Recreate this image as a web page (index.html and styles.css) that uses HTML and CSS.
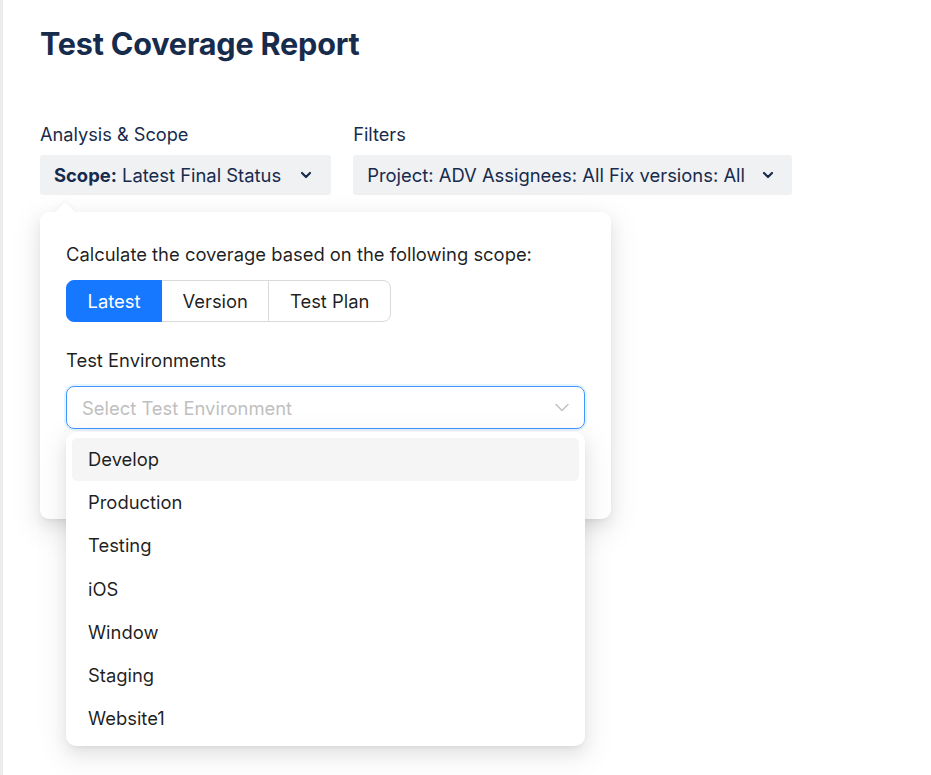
FILE: index.html
```html
<!DOCTYPE html>
<html lang="en">
<head>
<meta charset="utf-8">
<title>Test Coverage Report</title>
<link rel="stylesheet" href="styles.css">
</head>
<body>
<div class="page">
  <h1 class="title">Test Coverage Report</h1>
  <div class="toolbar">
    <div class="group">
      <div class="group-label">Analysis &amp; Scope</div>
      <div class="anchor">
        <button class="pill pill-scope"><b>Scope:</b>&nbsp;Latest Final Status
          <svg class="chev" width="12" height="8" viewBox="0 0 12 8"><path d="M2 2l4 4 4-4" fill="none" stroke="#172B4D" stroke-width="2.2" stroke-linecap="round" stroke-linejoin="round"/></svg>
        </button>
        <div class="popover">
          <div class="arrow"></div>
          <div class="pop-text">Calculate the coverage based on the following scope:</div>
          <div class="segmented">
            <span class="seg active">Latest</span>
            <span class="seg">Version</span>
            <span class="seg">Test Plan</span>
          </div>
          <div class="field-label">Test Environments</div>
          <div class="select">
            <span class="placeholder">Select Test Environment</span>
            <svg class="sel-chev" width="14" height="9" viewBox="0 0 14 9"><path d="M1 1.5l6 6 6-6" fill="none" stroke="#bfbfbf" stroke-width="1.4" stroke-linecap="round" stroke-linejoin="round"/></svg>
          </div>
          <div class="dropdown">
            <div class="option hover">Develop</div>
            <div class="option">Production</div>
            <div class="option">Testing</div>
            <div class="option">iOS</div>
            <div class="option">Window</div>
            <div class="option">Staging</div>
            <div class="option">Website1</div>
          </div>
        </div>
      </div>
    </div>
    <div class="group">
      <div class="group-label">Filters</div>
      <button class="pill">Project: ADV Assignees: All Fix versions: All
        <svg class="chev" width="12" height="8" viewBox="0 0 12 8"><path d="M2 2l4 4 4-4" fill="none" stroke="#172B4D" stroke-width="2.2" stroke-linecap="round" stroke-linejoin="round"/></svg>
      </button>
    </div>
  </div>
</div>
</body>
</html>
```

FILE: styles.css
```css
* { box-sizing: border-box; }
html, body { margin: 0; padding: 0; background: #fff; }
body {
  font-family: Inter, "Liberation Sans", sans-serif;
  color: #172B4D;
}
.page {
  min-height: 775px;
  border-left: 3px solid #ececec;
  padding: 26px 0 0 37px;
}
.title {
  margin: 0;
  font-size: 30.6px;
  font-weight: 700;
  line-height: 36px;
  color: #172B4D;
  letter-spacing: -0.2px;
}
.toolbar {
  display: flex;
  gap: 22px;
  margin-top: 60px;
}
.group-label {
  font-size: 18.2px;
  line-height: 24px;
  margin-bottom: 9px;
}
.anchor { position: relative; }
.pill {
  display: flex;
  align-items: center;
  height: 40px;
  border: none;
  border-radius: 3px;
  background: #f0f1f3;
  color: #172B4D;
  font-family: inherit;
  font-size: 18.4px;
  padding: 0 18px 0 14px;
  cursor: pointer;
}
.pill-scope { padding-right: 19px; }
.pill-scope .chev { margin-left: 19px; }
.pill b { font-weight: 700; }
.chev { margin-left: 17px; }
.popover {
  position: absolute;
  top: 57px;
  left: 0;
  width: 571px;
  height: 307px;
  background: #fff;
  border-radius: 9px;
  box-shadow: 0 6px 16px rgba(0,0,0,0.08), 0 3px 6px -4px rgba(0,0,0,0.12), 0 9px 28px 8px rgba(0,0,0,0.05);
  padding: 28px 26px;
  color: rgba(0,0,0,0.88);
  z-index: 2;
}
.arrow {
  position: absolute;
  top: -7px;
  left: 18px;
  width: 14px;
  height: 14px;
  background: #fff;
  transform: rotate(45deg);
  box-shadow: -2px -2px 4px rgba(0,0,0,0.03);
}
.pop-text {
  font-size: 18.4px;
  line-height: 28px;
}
.segmented {
  display: flex;
  margin-top: 12px;
}
.seg {
  height: 42px;
  line-height: 40px;
  padding: 0 20.5px;
  font-size: 18.4px;
  border: 1px solid #d9d9d9;
  margin-left: -1px;
  background: #fff;
}
.seg:first-child { border-radius: 8px 0 0 8px; margin-left: 0; }
.seg:last-child { border-radius: 0 8px 8px 0; }
.seg.active { background: #1677ff; border-color: #1677ff; color: #fff; position: relative; }
.field-label {
  margin-top: 24px;
  font-size: 18.4px;
  line-height: 28px;
}
.select {
  margin-top: 12px;
  height: 43px;
  border: 1px solid #4096ff;
  border-radius: 8px;
  box-shadow: 0 0 0 2px rgba(5,145,255,0.1);
  display: flex;
  align-items: center;
  justify-content: space-between;
  padding: 0 15px;
}
.placeholder { font-size: 18.4px; color: #bfbfbf; }
.dropdown {
  position: absolute;
  top: 220px;
  left: 26px;
  width: 519px;
  background: #fff;
  border-radius: 10px;
  padding: 6px;
  box-shadow: 0 6px 16px rgba(0,0,0,0.08), 0 3px 6px -4px rgba(0,0,0,0.12), 0 9px 28px 8px rgba(0,0,0,0.05);
}
.option {
  height: 43.2px;
  line-height: 43.2px;
  padding: 0 16px;
  font-size: 18.4px;
  border-radius: 5px;
  color: rgba(0,0,0,0.88);
}
.option.hover { background: #f5f5f5; }
```
